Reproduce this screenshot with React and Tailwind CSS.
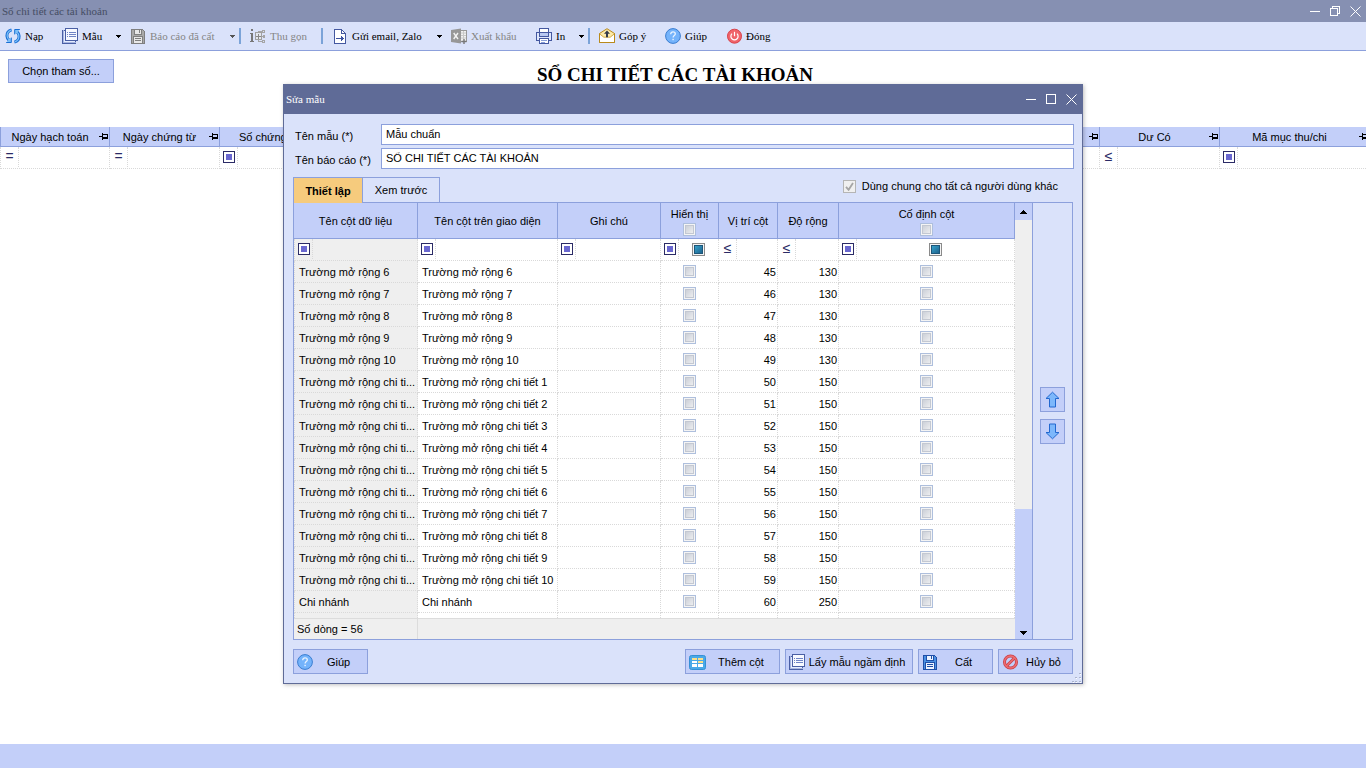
import React from "react";

const FILTER_BTN = "flex h-full w-[18px] shrink-0 items-center justify-center border-r border-dotted border-[#d9d9d9]";

/* ---------- icons ---------- */

function Svg({ w = 16, h = 16, children, crisp, className = "" }) {
  return (
    <svg
      width={w}
      height={h}
      viewBox={`0 0 ${w} ${h}`}
      fill="none"
      shapeRendering={crisp ? "crispEdges" : "auto"}
      className={`shrink-0 ${className}`}
      aria-hidden="true"
    >
      {children}
    </svg>
  );
}

const RefreshIcon = () => (
  <Svg>
    <path d="M6.6 1.9C3.4 2.8 1.8 5.4 1.9 8C2 9.6 2.7 11 3.9 12" stroke="#1a6fd4" strokeWidth="3" />
    <path d="M9.4 14.1C12.6 13.2 14.2 10.6 14.1 8C14 6.4 13.3 5 12.1 4" stroke="#1a6fd4" strokeWidth="3" />
    <path d="M1.2 14.5H6.3V9.6" fill="#7cc0f8" stroke="#1a6fd4" strokeWidth="1" />
    <path d="M14.8 1.5H9.7V6.4" fill="#7cc0f8" stroke="#1a6fd4" strokeWidth="1" />
    <path d="M6.2 2.1C3.4 3 2 5.4 2.1 8C2.2 9.6 2.9 11 4.3 12.4" stroke="#7cc0f8" strokeWidth="1.2" />
    <path d="M9.8 13.9C12.6 13 14 10.6 13.9 8C13.8 6.4 13.1 5 11.7 3.6" stroke="#7cc0f8" strokeWidth="1.2" />
  </Svg>
);

const TemplateIcon = () => (
  <Svg crisp>
    <rect x="0.5" y="2.5" width="13" height="13" fill="#e6edff" stroke="#4a5fa5" />
    <path d="M1.5 2V14.5H14" stroke="#a9b7e0" />
    <rect x="3.5" y="0.5" width="12" height="12" fill="#f7f9ff" stroke="#4a5fa5" />
    <path d="M7 4.5H14M7 6.5H14M7 8.5H14" stroke="#6f84c6" />
    <path d="M5 4.5H6M5 6.5H6M5 8.5H6" stroke="#6f84c6" />
  </Svg>
);

const SaveIcon = ({ stroke = "#7f7f7f", fill = "#a9a9a9", paper = "#e8e8e8" }) => (
  <Svg crisp>
    <path d="M1.5 1.5H12.5L14.5 3.5V15.5H1.5Z" fill={fill} stroke={stroke} />
    <rect x="4.5" y="1.5" width="7" height="5" fill={paper} stroke={stroke} />
    <rect x="9" y="2" width="1" height="3" fill={stroke} />
    <rect x="3.5" y="8.5" width="9" height="7" fill={paper} stroke={stroke} />
    <path d="M5 10.5H11M5 12.5H11" stroke={stroke} />
  </Svg>
);

const CollapseIcon = () => (
  <Svg crisp>
    <path d="M1 1H3V3H1ZM0 5H3V13H4V14H0V13H1V6H0Z" fill="#777" />
    <rect x="5.5" y="4.5" width="6" height="7" stroke="#a0a0a0" fill="#e4e7ee" />
    <path d="M6 8.5H11M8.5 6V11" stroke="#888" />
    <path d="M8.5 4V3.5H12M12 8.5H14M8.5 12V13.5H12" stroke="#a5a5a5" />
    <path d="M12.5 2.5H14.5V4.5H12.5ZM13.5 7.5H14.5V9.5H13.5ZM12.5 12.5H14.5V14.5H12.5Z" stroke="#a5a5a5" />
  </Svg>
);

const SendIcon = () => (
  <Svg crisp>
    <path d="M2.5 1.5H9.5L13.5 5.5V15.5H2.5Z" fill="#fff" stroke="#4458a0" />
    <path d="M9.5 1.5V5.5H13.5" stroke="#4458a0" />
    <path d="M4 10.5H12" stroke="#3c52a0" />
    <path d="M9 8H10V9H11V12H10V13H9Z" fill="#3c52a0" />
  </Svg>
);

const ExcelIcon = () => (
  <Svg>
    <rect x="8" y="2.5" width="7.5" height="11" fill="#f1f1f1" stroke="#999" />
    <path d="M10 5h5M10 7.5h5M10 10h5M12.5 3v8" stroke="#c8c8c8" />
    <path d="M0 2L10 0.5V15.5L0 14Z" fill="#979797" />
    <path d="M2.7 5L7 11M7 5L2.7 11" stroke="#f2f2f2" strokeWidth="1.4" />
    <path d="M10.5 13.5H15.5M13 11V16" stroke="#777" strokeWidth="1.4" />
  </Svg>
);

const PrintIcon = () => (
  <Svg crisp>
    <rect x="3.5" y="0.5" width="9" height="5" fill="#fff" stroke="#4458a0" />
    <path d="M0.5 4.5H15.5V12.5H0.5Z" fill="#dfe7fb" stroke="#4458a0" />
    <path d="M3.5 4.5H12.5V8.5H3.5Z" fill="#b9c9f2" stroke="#4458a0" />
    <rect x="3.5" y="10.5" width="9" height="5" fill="#fff" stroke="#4458a0" />
    <path d="M5 12.5H11M5 14.5H9" stroke="#8aa0d8" />
  </Svg>
);

const FeedbackIcon = () => (
  <Svg>
    <path d="M0.5 5.5L8 0.7L15.5 5.5V14.5H0.5Z" fill="#fdeaa8" stroke="#b98a1c" />
    <path d="M1 6L4.5 9H11.5L15 6V14H1Z" fill="#fff" />
    <path d="M1 6.2L4.8 9.2H11.2L15 6.2" stroke="#d3ab48" />
    <path d="M0.5 5.5V14.5H15.5V5.5" stroke="#b98a1c" />
    <path d="M8 2.4L11 5.8H9V9.2H7V5.8H5Z" fill="#333a4a" />
  </Svg>
);

const HelpIcon = () => (
  <Svg>
    <circle cx="8" cy="8" r="7.4" fill="#74b3fb" stroke="#3a7dd0" />
    <path d="M5.7 6.2C5.7 4.7 6.7 3.9 8 3.9C9.4 3.9 10.3 4.7 10.3 5.9C10.3 7.6 8.1 7.6 8.1 9.5" stroke="#e9f3ff" strokeWidth="1.3" />
    <rect x="7.4" y="10.8" width="1.4" height="1.4" fill="#e9f3ff" />
  </Svg>
);

const PowerIcon = () => (
  <Svg>
    <circle cx="8.5" cy="8.2" r="7" fill="#f0646a" stroke="#d8434b" />
    <path d="M6 5.6A3.6 3.6 0 1 0 11 5.6" stroke="#fff" strokeWidth="1.2" />
    <path d="M8.5 3.8V8.2" stroke="#fff" strokeWidth="1.2" />
  </Svg>
);

const ColumnsIcon = () => (
  <Svg w={17}>
    <rect x="0.5" y="1.5" width="16" height="14" rx="2" fill="#4aa9e8" stroke="#3590d6" />
    <rect x="3" y="4" width="5" height="2" fill="#fce08a" />
    <rect x="9" y="4" width="5" height="2" fill="#fce08a" />
    <rect x="3" y="7" width="5" height="2" fill="#fff" />
    <rect x="9" y="7" width="5" height="2" fill="#fce08a" />
    <rect x="3" y="10" width="5" height="3" fill="#fff" />
    <rect x="9" y="10" width="5" height="3" fill="#fff" />
  </Svg>
);

const CancelIcon = () => (
  <Svg>
    <circle cx="8.5" cy="8" r="6" stroke="#c93f46" strokeWidth="3" />
    <path d="M4.5 12L12.5 4" stroke="#c93f46" strokeWidth="3" />
    <circle cx="8.5" cy="8" r="6" stroke="#ee6d72" strokeWidth="1.4" />
    <path d="M4.5 12L12.5 4" stroke="#ee6d72" strokeWidth="1.4" />
  </Svg>
);

const ArrowIcon = ({ down }) => (
  <Svg w={15} h={17} className={down ? "rotate-180" : ""}>
    <path d="M7.5 1.2L14 7.5H10.5V16H4.5V7.5H1Z" fill="#7cb7fb" stroke="#2268d0" />
  </Svg>
);

const Caret = ({ color = "#000" }) => (
  <Svg w={5} h={3} crisp>
    <path d="M0 0H5V1H4V2H3V3H2V2H1V1H0Z" fill={color} />
  </Svg>
);

const ScrollCaret = ({ down }) => (
  <Svg w={7} h={4} crisp className={down ? "rotate-180" : ""}>
    <path d="M3 0H4V1H5V2H6V3H7V4H0V3H1V2H2V1H3Z" fill="#000" />
  </Svg>
);

const PinIcon = () => (
  <Svg w={9} h={7} crisp>
    <path d="M0 3H3V4H0Z" fill="#000" />
    <path d="M3 0H4V7H3Z" fill="#000" />
    <path fillRule="evenodd" d="M4 1H9V6H4ZM4 2V4H8V2Z" fill="#000" />
  </Svg>
);

const GripIcon = () => (
  <Svg w={10} h={10} crisp>
    {[[7, 0], [7, 4], [3, 4], [7, 8], [3, 8], [0, 8]].map(([x, y]) => (
      <g key={`${x}-${y}`}>
        <rect x={x + 1} y={y + 1} width="1" height="1" fill="#fff" />
        <rect x={x} y={y} width="2" height="1" fill="#aab3cd" />
      </g>
    ))}
  </Svg>
);

function WindowControls({ restore }) {
  return (
    <div className="flex items-center gap-2">
      <button aria-label="Thu nhỏ" className="flex w-3 justify-start">
        <Svg w={11} h={11} crisp><path d="M0 5.5H10" stroke="#fff" /></Svg>
      </button>
      <button aria-label="Phóng to" className="flex w-3 justify-start">
        <Svg w={11} h={11} crisp>
          {restore ? (
            <path d="M2.5 2V0.5H9.5V7.5H8M0.5 2.5H7.5V9.5H0.5Z" stroke="#fff" />
          ) : (
            <rect x="0.5" y="0.5" width="9" height="9" stroke="#fff" />
          )}
        </Svg>
      </button>
      <button aria-label="Đóng cửa sổ" className="flex w-3 justify-start">
        <Svg w={11} h={11}><path d="M0.5 0.5L10.5 10.5M10.5 0.5L0.5 10.5" stroke="#fff" /></Svg>
      </button>
    </div>
  );
}

/* ---------- toolbar ---------- */

function ToolItem({ icon, label, className, disabled }) {
  return (
    <button disabled={disabled} className={`flex h-5 shrink-0 items-center gap-1 text-left ${disabled ? "text-[#858585]" : "text-black"} ${className}`}>
      {icon}
      <span className="whitespace-nowrap">{label}</span>
    </button>
  );
}

const DropButton = ({ label, wide, disabled }) => (
  <button aria-label={label} disabled={disabled} className={`flex h-5 shrink-0 items-center ${wide ? "w-[14px]" : "w-[9px]"}`}>
    <Caret color={disabled ? "#555" : "#000"} />
  </button>
);

const Separator = () => <span className="mr-[9px] h-4 w-[2px] shrink-0 bg-[#7ba3d8]" />;

function Toolbar() {
  return (
    <div className="flex h-[29px] shrink-0 items-center overflow-hidden border-b border-[#8ca0dc] bg-[#dae2fa] pl-[5px] font-['Liberation_Serif',serif] text-[11px]">
      <ToolItem icon={<RefreshIcon />} label="Nạp" className="w-[57px]" />
      <ToolItem icon={<TemplateIcon />} label="Mẫu" className="w-[54px]" />
      <DropButton label="Chọn mẫu" wide />
      <ToolItem icon={<SaveIcon />} label="Báo cáo đã cất" className="w-[100px]" disabled />
      <DropButton label="Chọn báo cáo" disabled />
      <Separator />
      <ToolItem icon={<CollapseIcon />} label="Thu gọn" className="w-[71px]" disabled />
      <Separator />
      <ToolItem icon={<SendIcon />} label="Gửi email, Zalo" className="w-[105px]" />
      <DropButton label="Chọn cách gửi" wide />
      <ToolItem icon={<ExcelIcon />} label="Xuất khẩu" className="w-[85px]" disabled />
      <ToolItem icon={<PrintIcon />} label="In" className="w-[43px]" />
      <DropButton label="Chọn cách in" />
      <Separator />
      <ToolItem icon={<FeedbackIcon />} label="Góp ý" className="w-[66px]" />
      <ToolItem icon={<HelpIcon />} label="Giúp" className="w-[61px]" />
      <ToolItem icon={<PowerIcon />} label="Đóng" className="w-[50px]" />
    </div>
  );
}

/* ---------- filter row pieces ---------- */

function FilterOperator({ kind }) {
  return (
    <button aria-label="Điều kiện lọc" className={FILTER_BTN}>
      {kind === "box" ? (
        <span className="flex size-3 items-center justify-center border border-[#2b2b66] bg-white">
          <span className="size-[6px] bg-[#6a68d0]" />
        </span>
      ) : (
        <span className="pb-[2px] text-[14px] leading-none text-[#2b2b66]">{kind}</span>
      )}
    </button>
  );
}

function FilterCell({ kind, children }) {
  return (
    <div className="flex h-[21px] items-center pb-px">
      <FilterOperator kind={kind} />
      {children || <input aria-label="Giá trị lọc" className="h-full w-0 min-w-0 flex-1 bg-transparent px-1 outline-none" />}
    </div>
  );
}

function GridCheckbox({ label }) {
  return (
    <input
      type="checkbox"
      aria-label={label}
      className="block size-[13px] shrink-0 appearance-none border border-[#aebfdd] bg-linear-to-br from-[#c3c8d2] to-[#f6f6f6] shadow-[inset_0_0_0_1px_#f4f4f4,inset_0_0_0_2px_#c3c8d2]"
    />
  );
}

function TriStateCheckbox({ label }) {
  return (
    <span className="flex flex-1 justify-center">
      <input
        type="checkbox"
        aria-label={label}
        className="block size-[13px] appearance-none border border-[#8a8a8a] bg-linear-to-br from-[#3fb4dc] to-[#16537e] shadow-[inset_0_0_0_1px_#f4f4f4,inset_0_0_0_2px_#1d5578]"
      />
    </span>
  );
}

/* ---------- report page ---------- */

const REPORT_COLUMNS = [
  { label: "Ngày hạch toán", width: "w-[110px]", op: "=" },
  { label: "Ngày chứng từ", width: "w-[110px]", op: "=" },
  { label: "Số chứng từ", width: "w-[110px]", op: "box" },
  { label: "", width: "w-[770px]", op: "box" },
  { label: "Dư Có", width: "w-[120px]", op: "≤" },
  { label: "Mã mục thu/chi", width: "w-[150px]", op: "box" },
];

function ReportTable() {
  return (
    <div className="overflow-hidden">
      <table className="w-[1370px] table-fixed border-separate border-spacing-0">
        <thead>
          <tr>
            {REPORT_COLUMNS.map((c) => (
              <th key={c.label} className={`h-5 border-r border-b border-[#8ca0dc] bg-[#c3cff9] p-0 font-normal first:border-l ${c.width}`}>
                <div className="flex items-center pr-px">
                  <span className="flex-1">{c.label}</span>
                  <PinIcon />
                </div>
              </th>
            ))}
          </tr>
        </thead>
        <tbody>
          <tr>
            {REPORT_COLUMNS.map((c) => (
              <td key={c.label} className="border-r border-b border-dotted border-[#d9d9d9] p-0 first:border-l">
                <FilterCell kind={c.op} />
              </td>
            ))}
          </tr>
        </tbody>
      </table>
    </div>
  );
}

/* ---------- dialog ---------- */

const ROWS = [
  ...[6, 7, 8, 9, 10].map((n, i) => ({
    field: `Trường mở rộng ${n}`,
    name: `Trường mở rộng ${n}`,
    pos: 45 + i,
    width: 130,
  })),
  ...[1, 2, 3, 4, 5, 6, 7, 8, 9, 10].map((n, i) => ({
    field: "Trường mở rộng chi ti...",
    name: `Trường mở rộng chi tiết ${n}`,
    pos: 50 + i,
    width: 150,
  })),
  { field: "Chi nhánh", name: "Chi nhánh", pos: 60, width: 250 },
];

const TH = "h-9 border-r border-b border-[#8ca0dc] bg-[#c3cff9] p-0 font-normal";
const TD = "h-[22px] border-r border-b border-dotted border-[#d9d9d9] p-0";
const GRAY = "border-l bg-[#efefef]";

function ColumnTable() {
  return (
    <table className="w-full table-fixed border-separate border-spacing-0">
      <colgroup>
        <col className="w-[124px]" />
        <col className="w-[140px]" />
        <col className="w-[103px]" />
        <col className="w-[58px]" />
        <col className="w-[59px]" />
        <col className="w-[61px]" />
        <col />
      </colgroup>
      <thead>
        <tr>
          <th className={TH}>Tên cột dữ liệu</th>
          <th className={TH}>Tên cột trên giao diện</th>
          <th className={TH}>Ghi chú</th>
          <th className={TH}>
            <div className="flex flex-col items-center leading-[18px]">
              Hiển thị
              <GridCheckbox label="Hiển thị tất cả" />
            </div>
          </th>
          <th className={TH}>Vị trí cột</th>
          <th className={TH}>Độ rộng</th>
          <th className={TH}>
            <div className="flex flex-col items-center leading-[18px]">
              Cố định cột
              <GridCheckbox label="Cố định tất cả" />
            </div>
          </th>
        </tr>
      </thead>
      <tbody>
        <tr>
          <td className={`${TD} ${GRAY}`}><FilterCell kind="box" /></td>
          <td className={TD}><FilterCell kind="box" /></td>
          <td className={TD}><FilterCell kind="box" /></td>
          <td className={TD}><FilterCell kind="box"><TriStateCheckbox label="Lọc hiển thị" /></FilterCell></td>
          <td className={TD}><FilterCell kind="≤" /></td>
          <td className={TD}><FilterCell kind="≤" /></td>
          <td className={TD}><FilterCell kind="box"><TriStateCheckbox label="Lọc cố định cột" /></FilterCell></td>
        </tr>
        {ROWS.map((r) => (
          <tr key={r.name}>
            <td className={`${TD} ${GRAY} pl-1 whitespace-nowrap`}>{r.field}</td>
            <td className={`${TD} pl-1 whitespace-nowrap`}>{r.name}</td>
            <td className={TD} />
            <td className={TD}><div className="flex justify-center"><GridCheckbox label={`Hiển thị ${r.name}`} /></div></td>
            <td className={`${TD} pr-px text-right`}>{r.pos}</td>
            <td className={`${TD} pr-px text-right`}>{r.width}</td>
            <td className={TD}><div className="flex justify-center"><GridCheckbox label={`Cố định ${r.name}`} /></div></td>
          </tr>
        ))}
        <tr>
          {[0, 1, 2, 3, 4, 5, 6].map((i) => (
            <td key={i} className={`h-[5px] border-r border-dotted border-[#d9d9d9] p-0 ${i === 0 ? GRAY : ""}`} />
          ))}
        </tr>
      </tbody>
      <tfoot>
        <tr className="bg-[#efefef]">
          <td className="h-[21px] border-t border-r border-[#dcdcdc] p-0 pl-[3px]">Số dòng = 56</td>
          <td colSpan={6} className="border-t border-[#dcdcdc] p-0" />
        </tr>
      </tfoot>
    </table>
  );
}

function ScrollBar() {
  return (
    <div className="flex w-[17px] shrink-0 flex-col bg-[#efefef]">
      <button aria-label="Cuộn lên" className="flex h-[17px] items-center justify-center bg-[#c3cff9]"><ScrollCaret /></button>
      <div className="flex-1" />
      <div className="h-[113px] bg-[#c3cff9]" />
      <button aria-label="Cuộn xuống" className="flex h-[17px] items-end justify-center bg-[#c3cff9] pb-1"><ScrollCaret down /></button>
    </div>
  );
}

function ActionButton({ icon, label, className }) {
  return (
    <button className={`flex h-[25px] items-center border border-[#8ca0dc] bg-[#c3cff9] pr-[3px] pl-[3px] ${className}`}>
      {icon}
      <span className="flex-1 text-center whitespace-nowrap">{label}</span>
    </button>
  );
}

const MOVE_BTN = "flex size-[25px] items-center justify-center border border-[#8ca0dc] bg-[#c3cff9]";
const FIELD = "h-[21px] min-w-0 flex-1 border border-[#8ca0dc] bg-white px-[4px] pb-px outline-none";

function EditTemplateDialog() {
  return (
    <section role="dialog" aria-labelledby="dialog-title" className="relative flex w-full max-w-[800px] flex-col border border-[#5f6b97] bg-[#dae2fa] shadow-[1px_1px_4px_rgba(0,0,0,0.25)]">
      <header className="flex h-[29px] items-center justify-between bg-[#5f6b97] pr-1 pb-px pl-[2px] text-white">
        <h2 id="dialog-title" className="font-['Liberation_Serif',serif]">Sửa mẫu</h2>
        <WindowControls />
      </header>

      <div className="flex flex-col px-[9px] pt-[10px] pb-[9px]">
        <div className="-mr-px flex flex-col gap-[3px] pl-[2px]">
          <div className="flex items-center">
            <label htmlFor="ten-mau" className="w-[86px] pt-[2px]">Tên mẫu (*)</label>
            <input id="ten-mau" defaultValue="Mẫu chuẩn" className={FIELD} />
          </div>
          <div className="flex items-center">
            <label htmlFor="ten-bao-cao" className="w-[86px] pt-[2px]">Tên báo cáo (*)</label>
            <input id="ten-bao-cao" defaultValue="SỔ CHI TIẾT CÁC TÀI KHOẢN" className={FIELD} />
          </div>
        </div>

        <div className="relative mt-2 -mb-px flex items-start justify-between">
          <div role="tablist" className="flex">
            <button role="tab" aria-selected="true" className="h-[26px] w-[70px] border-t border-r border-l border-[#8ca0dc] bg-[#f6cb7d] font-bold">Thiết lập</button>
            <button role="tab" aria-selected="false" className="h-[26px] w-[77px] border-t border-r border-b border-[#8ca0dc]">Xem trước</button>
          </div>
          <label className="flex items-center gap-[6px] pt-[2px] pr-[15px]">
            <span className="flex size-[13px] items-center justify-center border border-[#b5b5b5] bg-[#f0f0f0]">
              <input type="checkbox" defaultChecked disabled className="absolute size-[13px] appearance-none" />
              <Svg w={9} h={9}><path d="M1 4.8L3.6 7.8L8 1" stroke="#a5a5a5" strokeWidth="1.8" /></Svg>
            </span>
            Dùng chung cho tất cả người dùng khác
          </label>
        </div>

        <div className="flex border border-[#8ca0dc]">
          <div className="min-w-0 flex-1 bg-white"><ColumnTable /></div>
          <ScrollBar />
          <div className="flex w-10 shrink-0 flex-col items-center justify-center gap-[7px] border-l border-[#8ca0dc] pb-3">
            <button aria-label="Chuyển lên" className={MOVE_BTN}><ArrowIcon /></button>
            <button aria-label="Chuyển xuống" className={MOVE_BTN}><ArrowIcon down /></button>
          </div>
        </div>

        <footer className="mt-[9px] flex items-center gap-[5px]">
          <ActionButton icon={<HelpIcon />} label="Giúp" className="mr-auto w-[75px]" />
          <ActionButton icon={<ColumnsIcon />} label="Thêm cột" className="w-[95px]" />
          <ActionButton icon={<TemplateIcon />} label="Lấy mẫu ngầm định" className="w-[128px]" />
          <ActionButton icon={<SaveIcon stroke="#1f4fa8" fill="#4a90e2" paper="#eef4ff" />} label="Cất" className="w-[75px]" />
          <ActionButton icon={<CancelIcon />} label="Hủy bỏ" className="w-[75px]" />
        </footer>
      </div>
      <div className="absolute right-0 bottom-0"><GripIcon /></div>
    </section>
  );
}

export default function App() {
  return (
    <div className="relative flex min-h-screen flex-col overflow-hidden bg-white font-['Liberation_Sans',Arial,sans-serif] text-[11px] leading-[14px] text-black">
      <header className="flex h-[22px] shrink-0 items-center justify-between bg-[#8690b2] pr-1 pl-[2px]">
        <h1 className="font-['Liberation_Serif',serif] text-[#454d63]">Sổ chi tiết các tài khoản</h1>
        <WindowControls restore />
      </header>
      <Toolbar />
      <main className="flex-1">
        <div className="flex h-[76px] items-start pt-2 pl-2">
          <button className="h-6 w-[106px] border border-[#8ca0dc] bg-[#c3cff9]">Chọn tham số...</button>
          <h2 className="flex-1 pt-1 pr-[130px] text-center font-['Liberation_Serif',serif] text-[19px] leading-6 font-bold">SỔ CHI TIẾT CÁC TÀI KHOẢN</h2>
        </div>
        <ReportTable />
      </main>
      <footer className="h-6 shrink-0 bg-[#c3cff9]" />

      <div className="absolute inset-0 flex items-center justify-center">
        <EditTemplateDialog />
      </div>
    </div>
  );
}
